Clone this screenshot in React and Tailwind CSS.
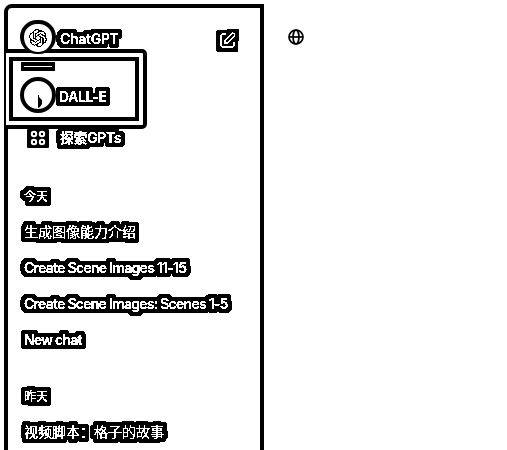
import React from 'react';

function Label({ children, className = '' }) {
  return (
    <span className={`inline-block whitespace-nowrap leading-5 text-white [filter:url(#halo)] ${className}`}>
      {children}
    </span>
  );
}

// Gives white text a crisp black outline, four pixels wide.
function HaloFilter() {
  return (
    <svg className="absolute h-0 w-0" aria-hidden="true">
      <filter id="halo" x="-20" y="-20" width="300" height="70" filterUnits="userSpaceOnUse" colorInterpolationFilters="sRGB">
        <feComponentTransfer in="SourceGraphic" result="crisp">
          <feFuncA type="discrete" tableValues="0 0 1 1 1 1" />
        </feComponentTransfer>
        <feMorphology in="crisp" operator="dilate" radius="4 3" result="a" />
        <feMorphology in="crisp" operator="dilate" radius="3 4" result="b" />
        <feMerge result="m">
          <feMergeNode in="a" />
          <feMergeNode in="b" />
        </feMerge>
        <feColorMatrix in="m" values="0 0 0 0 0  0 0 0 0 0  0 0 0 0 0  0 0 0 1 0" result="dark" />
        <feMerge>
          <feMergeNode in="dark" />
          <feMergeNode in="crisp" />
        </feMerge>
      </filter>
    </svg>
  );
}

function Knot() {
  return (
    <svg className="h-[18px] w-[18px]" viewBox="0 0 24 24" fill="black" shapeRendering="crispEdges">
      <path d="M22.28 9.82a5.98 5.98 0 0 0-.52-4.91 6.05 6.05 0 0 0-6.51-2.9A6.07 6.07 0 0 0 4.98 4.18a5.98 5.98 0 0 0-4 2.9 6.05 6.05 0 0 0 .74 7.1 5.98 5.98 0 0 0 .51 4.91 6.05 6.05 0 0 0 6.51 2.9A5.98 5.98 0 0 0 13.26 24a6.06 6.06 0 0 0 5.77-4.21 5.99 5.99 0 0 0 4-2.9 6.06 6.06 0 0 0-.75-7.07zm-9.02 12.61a4.48 4.48 0 0 1-2.88-1.04l.14-.08 4.78-2.76a.79.79 0 0 0 .39-.68v-6.74l2.02 1.17a.07.07 0 0 1 .04.05v5.58a4.5 4.5 0 0 1-4.49 4.5zM3.6 18.3a4.47 4.47 0 0 1-.54-3.01l.14.09 4.78 2.76a.77.77 0 0 0 .78 0l5.84-3.37v2.33a.08.08 0 0 1-.03.06L9.74 19.95A4.5 4.5 0 0 1 3.6 18.3zM2.34 7.9a4.49 4.49 0 0 1 2.37-1.98V11.6a.77.77 0 0 0 .39.68l5.81 3.35-2.02 1.17a.08.08 0 0 1-.07 0l-4.83-2.79A4.5 4.5 0 0 1 2.34 7.87zm16.6 3.85-5.84-3.38 2.02-1.16a.08.08 0 0 1 .07 0l4.83 2.79a4.49 4.49 0 0 1-.68 8.1V12.4a.79.79 0 0 0-.4-.65zm2.01-3.02-.14-.09-4.77-2.78a.78.78 0 0 0-.79 0L9.41 9.23V6.9a.07.07 0 0 1 .03-.06l4.83-2.79a4.5 4.5 0 0 1 6.68 4.66zM8.31 12.86l-2.02-1.16a.08.08 0 0 1-.04-.06V6.07a4.5 4.5 0 0 1 7.38-3.45l-.14.08-4.78 2.76a.79.79 0 0 0-.39.68zm1.1-2.36L12.01 9l2.61 1.5v3l-2.6 1.5-2.61-1.5z" />
    </svg>
  );
}

function EditIcon() {
  return (
    <svg className="h-[23px] w-[23px]" viewBox="0 0 23 23" fill="none" shapeRendering="crispEdges">
      <path d="M1 1H11V0H22L23 1V11L22 12V22L21 23H1L0 22V2Z" fill="black" />
      <path d="M10 5H6.5Q5 5 5 6.5V16.5Q5 18 6.5 18H16.5Q18 18 18 16.5V13" stroke="white" strokeWidth="1.6" />
      <path d="M9 14V11.2L15.8 4.4Q17 3.6 18.2 4.8Q19.2 6 18.3 7L11.6 13.8Z" stroke="white" strokeWidth="1.4" />
    </svg>
  );
}

function GridIcon() {
  return (
    <svg className="h-5 w-[22px]" viewBox="0 0 22 20">
      <rect width="22" height="19" y="1" rx="1" fill="black" />
      {[7, 15].map((x) =>
        [6, 14].map((y) => (
          <circle key={`${x}-${y}`} cx={x} cy={y} r="2.2" fill="none" stroke="white" strokeWidth="2" />
        )),
      )}
    </svg>
  );
}

function Globe() {
  return (
    <svg className="h-4 w-4" viewBox="0 0 16 16" fill="none" stroke="black" strokeWidth="1.7">
      <circle cx="8" cy="8" r="7" />
      <ellipse cx="8" cy="8" rx="2.9" ry="7" />
      <path d="M1 8H15" />
    </svg>
  );
}

export default function App() {
  return (
    <div className="flex h-[450px] w-[507px] overflow-hidden bg-white pl-1 pt-1 font-[Inter,'Noto_Sans_CJK_SC',sans-serif]">
      <HaloFilter />
      <aside className="relative h-[460px] w-[260px] shrink-0 rounded-tl-lg border-4 border-black pl-3 pt-3">
        <div className="absolute -left-1 top-[41px] h-20 w-[143px] rounded-l-[2px] rounded-r-[5px] border-4 border-l-2 border-black bg-white pl-[3px] pt-1">
          <div className="h-16 w-[130px] border-4 border-black" />
        </div>
        <div className="relative flex h-[34px] items-center">
          <div className="flex h-[34px] w-9 items-center justify-center rounded-full border-4 border-b-2 border-black bg-white"><Knot /></div>
          <Label className="ml-1 mt-1 text-sm font-semibold tracking-[-0.3px]">ChatGPT</Label>
          <div className="ml-auto mr-[21px] mt-1.5"><EditIcon /></div>
        </div>
        <div className="relative mt-2 ml-px h-[9px] w-[34px] bg-black px-[3px] pt-1">
          <div className="h-px bg-white" />
        </div>
        <div className="relative mt-1.5 flex h-9 items-center">
          <div className="flex h-9 w-9 items-center justify-center rounded-full border-4 border-black">
            <svg className="ml-1 mt-3 h-[13px] w-1" viewBox="0 0 4 13"><path d="M0 0H1V2L4 5V9L2 12L0 13Z" fill="black" /></svg>
          </div>
          <Label className="ml-[3px] mt-1 text-sm font-semibold tracking-[-0.4px]">DALL-E</Label>
        </div>
        <div className="relative mt-[15px] flex h-5 items-center pl-[7px]">
          <GridIcon />
          <Label className="ml-[11px] text-sm font-semibold tracking-[-0.4px]">探索GPTs</Label>
        </div>
        <div className="relative mt-[30px] pl-1">
          <div className="flex h-9 items-center pt-0.5"><Label className="text-xs font-medium">今天</Label></div>
          <div className="flex h-9 items-center"><Label className="text-sm">生成图像能力介绍</Label></div>
          <div className="flex h-9 items-center"><Label className="text-sm font-semibold tracking-[-0.72px]">Create Scene Images 11-15</Label></div>
          <div className="flex h-9 items-center"><Label className="text-sm font-semibold tracking-[-0.74px]">Create Scene Images: Scenes 1-5</Label></div>
          <div className="flex h-9 items-center"><Label className="text-sm font-semibold tracking-[-0.74px]">New chat</Label></div>
          <div className="mt-5 flex h-9 items-center pt-0.5"><Label className="text-xs font-medium">昨天</Label></div>
          <div className="flex h-9 items-center"><Label className="text-sm">视频脚本：格子的故事</Label></div>
        </div>
      </aside>
      <main className="pl-6 pt-[25px]"><Globe /></main>
    </div>
  );
}
